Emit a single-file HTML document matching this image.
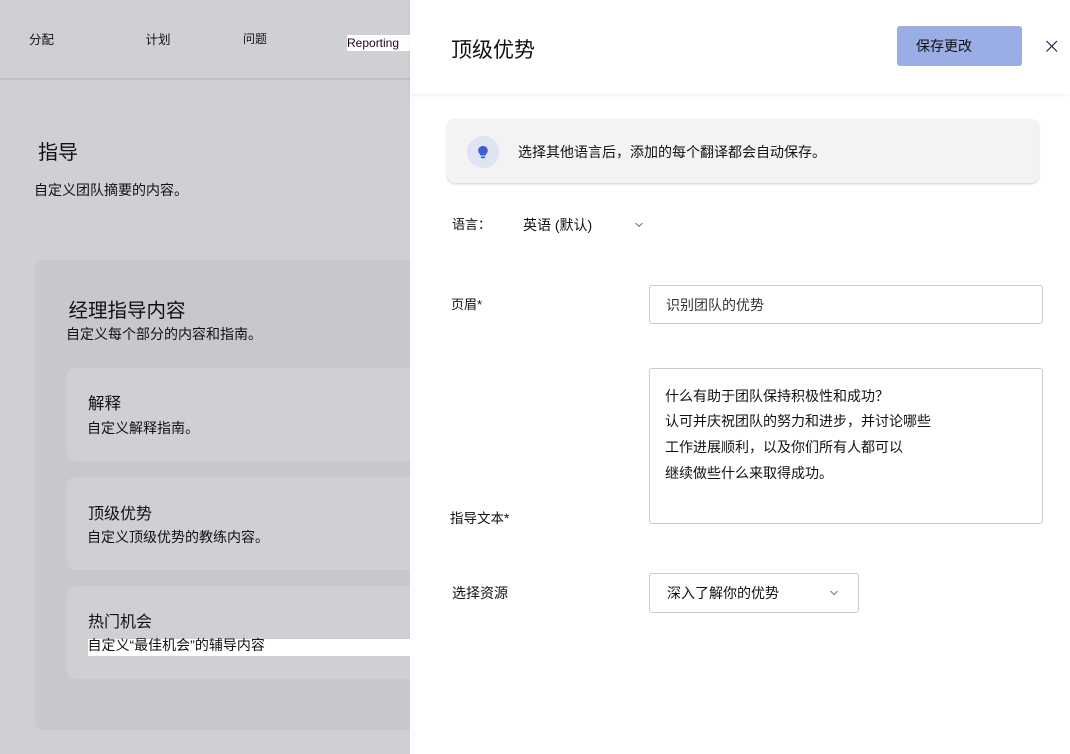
<!DOCTYPE html>
<html lang="zh"><head><meta charset="utf-8"><style>
html,body{margin:0;padding:0;width:1070px;height:754px;overflow:hidden;background:#fff}
body{position:relative;font-family:"Liberation Sans","WenQuanYi Zen Hei","Noto Sans CJK SC",sans-serif;color:#111;font-size:14px}
.a{position:absolute;white-space:nowrap;line-height:20px}
.b{position:absolute}
</style></head><body>
<div class="b" style="left:0;top:0;width:410px;height:754px;background:#cfd0d4;overflow:hidden">
<div class="b" style="left:0;top:78px;width:410px;height:2px;background:linear-gradient(#bdbec2,#c8c9cd)"></div>
<div class="b" style="left:35px;top:260px;width:400px;height:470px;background:#c7c8cc;border-radius:8px"></div>
<div class="b" style="left:67px;top:368px;width:380px;height:93px;background:#cfd0d4;border-radius:8px"></div>
<div class="b" style="left:67px;top:477px;width:380px;height:93px;background:#cfd0d4;border-radius:8px"></div>
<div class="b" style="left:67px;top:586px;width:380px;height:93px;background:#cfd0d4;border-radius:8px"></div>
<div class="b" style="left:88px;top:639px;width:322px;height:17px;background:#fff"></div>
<div class="b" style="left:347px;top:35px;width:63px;height:16px;background:#fff"></div>
</div>
<div class="a" style="left:29px;top:30px;font-size:12.5px">分配</div>
<div class="a" style="left:145.5px;top:30px;font-size:12.5px">计划</div>
<div class="a" style="left:243px;top:29px;font-size:12px">问题</div>
<div class="a" style="left:347px;top:33px;font-size:12px;color:#200020">Reporting</div>
<div class="a" style="left:38px;top:143px;font-size:20px">指导</div>
<div class="a" style="left:34px;top:180px">自定义团队摘要的内容。</div>
<div class="a" style="left:68.5px;top:301px;font-size:19.5px">经理指导内容</div>
<div class="a" style="left:66px;top:324px">自定义每个部分的内容和指南。</div>
<div class="a" style="left:88px;top:394px;font-size:16.5px">解释</div>
<div class="a" style="left:87px;top:418px">自定义解释指南。</div>
<div class="a" style="left:88px;top:505px;font-size:16px">顶级优势</div>
<div class="a" style="left:87px;top:527px">自定义顶级优势的教练内容。</div>
<div class="a" style="left:88px;top:613px;font-size:16px">热门机会</div>
<div class="a" style="left:87.5px;top:635px">自定义“最佳机会”的辅导内容</div>
<div class="b" style="left:410px;top:0;width:660px;height:94px;background:#fff;box-shadow:0 1px 4px rgba(0,0,0,.07)"></div>
<div class="a" style="left:451px;top:41px;font-size:21px">顶级优势</div>
<div class="b" style="left:897px;top:26px;width:125px;height:40px;background:#9aade4;border-radius:3px"></div>
<div class="a" style="left:916px;top:36px">保存更改</div>
<svg class="b" style="left:1044px;top:38px" width="16" height="16" viewBox="0 0 16 16"><path d="M2.5 3 13 13.500M13 3 2.500 13.500" stroke="#1b2440" stroke-width="1.200" fill="none"/></svg>
<div class="b" style="left:447px;top:119px;width:592px;height:64px;background:#f3f3f3;border-radius:8px;box-shadow:0 1px 2px rgba(0,0,0,.18)"></div>
<div class="b" style="left:467px;top:136px;width:32px;height:32px;background:#e0e4f2;border-radius:50%"></div>
<svg class="b" style="left:475px;top:143px" width="16" height="18" viewBox="0 0 16 18"><path d="M8 3C5.200 3 3.200 5 3.200 7.500c0 1.800.9 2.700 1.600 3.500.4.500.5 1 .6 1.500h5.200c.1-.5.2-1 .6-1.500.7-.8 1.600-1.700 1.600-3.500C12.800 5 10.800 3 8 3Z" fill="#3b5fd0"/><path d="M5.800 13.500h4.400v.6c0 .7-.6 1.100-1.200 1.100H7c-.6 0-1.200-.4-1.200-1.100Z" fill="#3b5fd0"/></svg>
<div class="a" style="left:518px;top:142px">选择其他语言后，添加的每个翻译都会自动保存。</div>
<div class="a" style="left:452px;top:215px;font-size:13px">语言：</div>
<div class="a" style="left:523px;top:215px">英语 (默认)</div>
<svg class="b" style="left:633px;top:220px" width="12" height="10" viewBox="0 0 12 10"><path d="M2.500 3 6 6.500 9.500 3" stroke="#777" fill="none"/></svg>
<div class="a" style="left:451px;top:295px;font-size:13px">页眉*</div>
<div class="b" style="left:649px;top:285px;width:392px;height:37px;border:1px solid #ccc;border-radius:3px"></div>
<div class="a" style="left:666px;top:295px;color:#333">识别团队的优势</div>
<div class="b" style="left:649px;top:368px;width:392px;height:154px;border:1px solid #ccc;border-radius:3px"></div>
<div class="a" style="left:665px;top:386px">什么有助于团队保持积极性和成功？</div>
<div class="a" style="left:665px;top:411px">认可并庆祝团队的努力和进步，并讨论哪些</div>
<div class="a" style="left:665px;top:437px">工作进展顺利，以及你们所有人都可以</div>
<div class="a" style="left:665px;top:463px">继续做些什么来取得成功。</div>
<div class="a" style="left:450px;top:509px;font-size:13.500px">指导文本*</div>
<div class="a" style="left:452px;top:583px">选择资源</div>
<div class="b" style="left:649px;top:573px;width:208px;height:38px;border:1px solid #ccc;border-radius:3px"></div>
<div class="a" style="left:667px;top:583px">深入了解你的优势</div>
<svg class="b" style="left:828px;top:588px" width="12" height="10" viewBox="0 0 12 10"><path d="M2.500 3 6 6.500 9.500 3" stroke="#777" fill="none"/></svg>
</body></html>
